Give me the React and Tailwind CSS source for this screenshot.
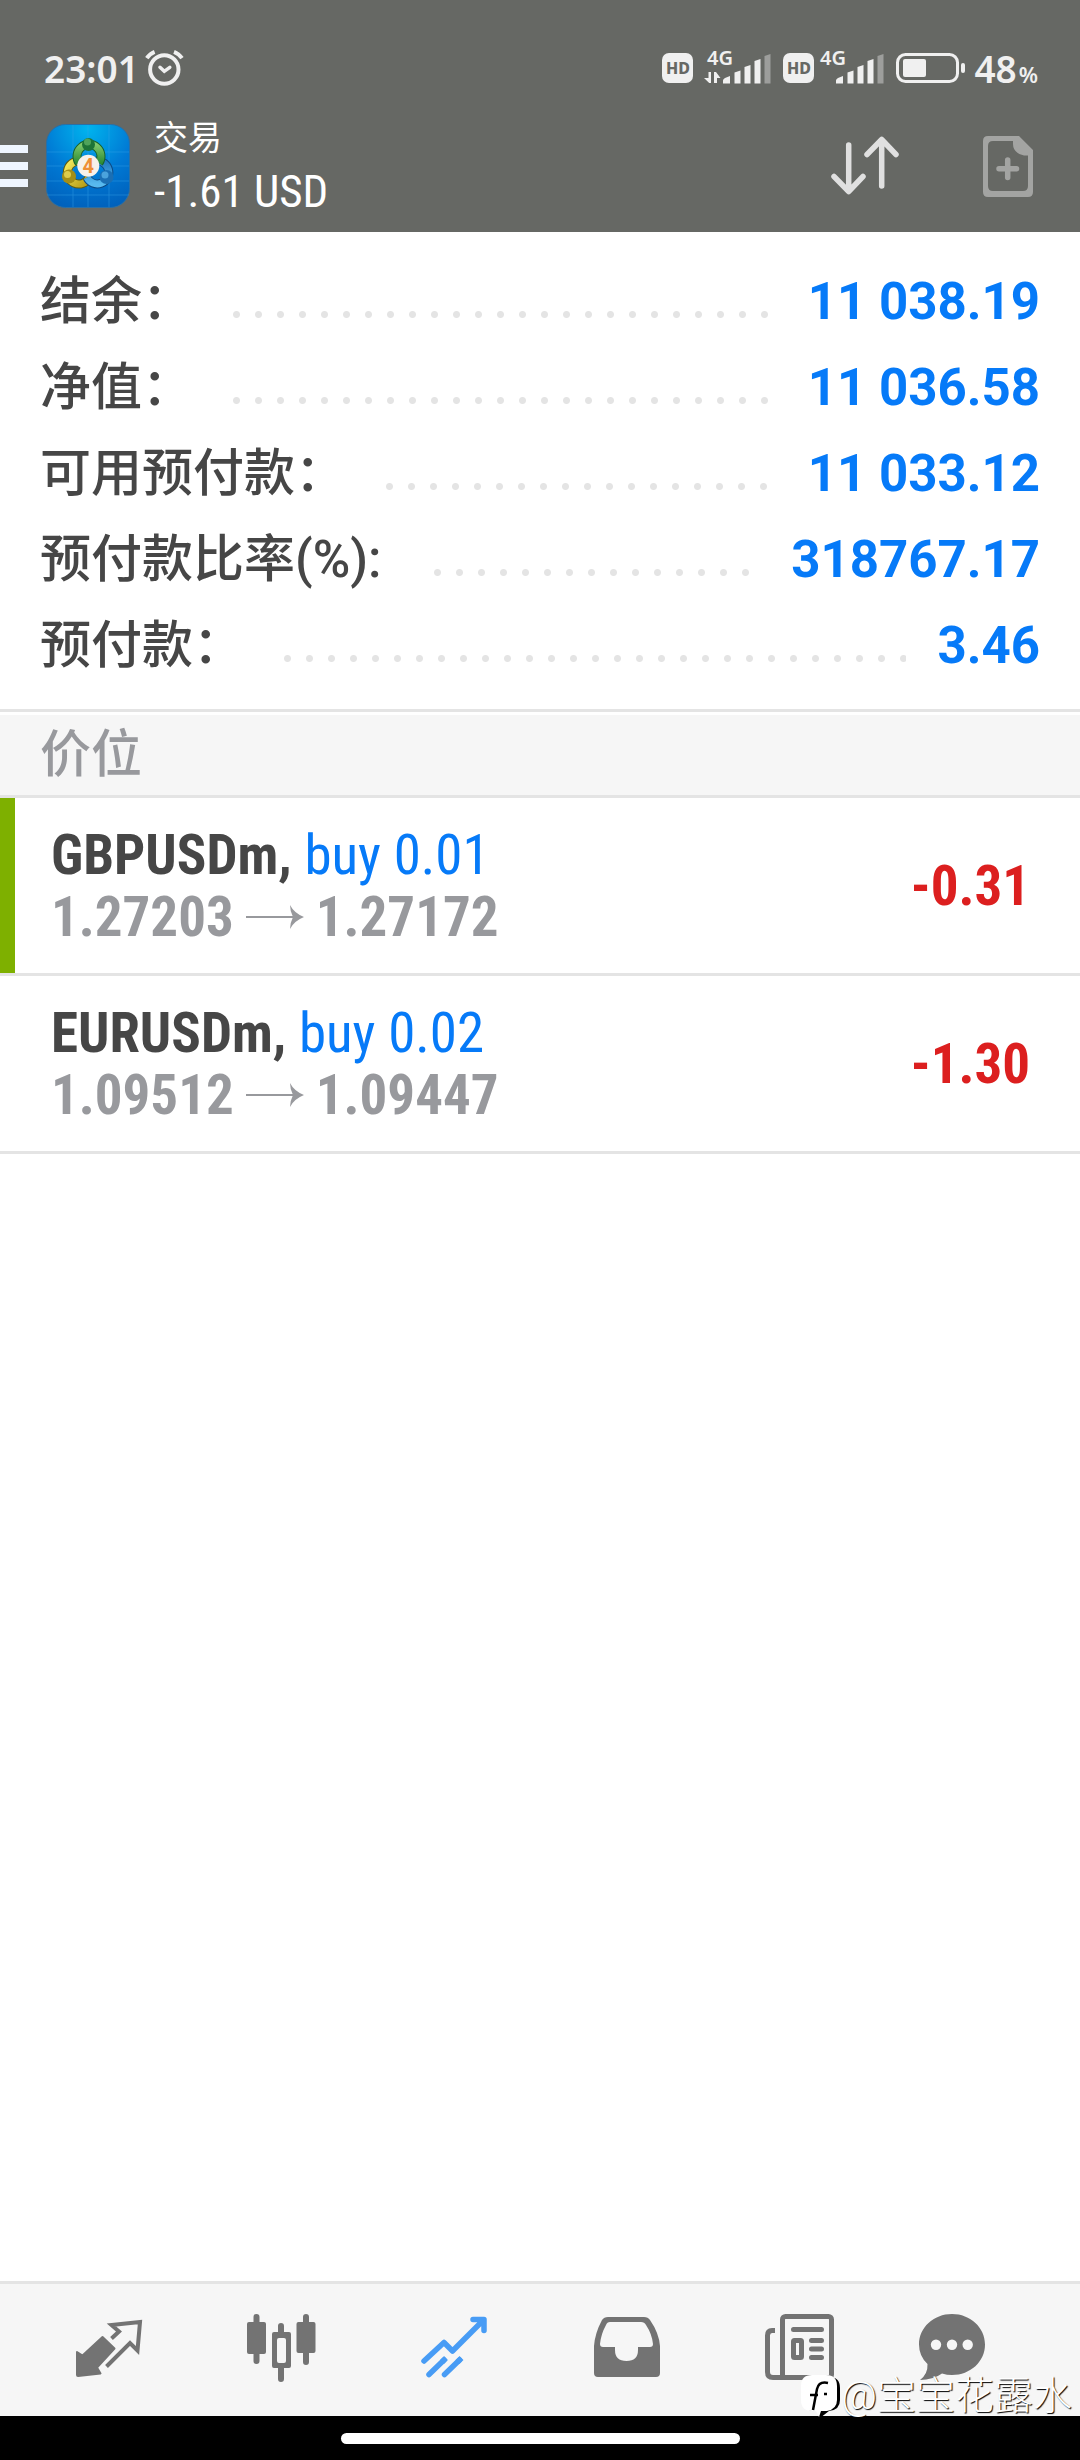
import React from 'react';

const summary = [
  { label: '结余：', value: '11 038.19' },
  { label: '净值：', value: '11 036.58' },
  { label: '可用预付款：', value: '11 033.12' },
  { label: '预付款比率(%):\u00a0', value: '318767.17' },
  { label: '预付款：', value: '3.46' },
];

const positions = [
  { symbol: 'GBPUSDm', side: 'buy 0.01', open: '1.27203', current: '1.27172', profit: '-0.31', active: true },
  { symbol: 'EURUSDm', side: 'buy 0.02', open: '1.09512', current: '1.09447', profit: '-1.30', active: false },
];

const AlarmIcon = () => (
  <svg width="42" height="40" viewBox="0 0 42 40" fill="none" stroke="currentColor" strokeWidth="4" strokeLinecap="round">
    <circle cx="21.3" cy="21.5" r="14.2" />
    <path d="M17 19.3l4.3 4 5.5-4" strokeWidth="3.5" />
    <path d="M3.8 10.2Q7 5.5 11.6 3.8M31 3.8Q35.6 5.5 39 10.2" strokeLinecap="butt" />
  </svg>
);

const HdBadge = () => (
  <span className="flex h-[30px] w-[31px] items-center justify-center rounded-[7px] bg-[#f0f0f0] text-[16px] leading-none font-extrabold text-[#666864]">
    HD
  </span>
);

const SignalIcon = ({ data }) => (
  <svg width="68" height="52" viewBox="0 -8 68 52" fill="currentColor">
    <text x="4" y="15" fontSize="20" fontWeight="600">4G</text>
    {data && <path d="M1 28h4.5v-6H8v11H6.2zM11 22h2l4.5 6H14v5h-3z" />}
    <path d="M20 33.5v-3Q20 29 22 28l5-2v7.5zM31.5 33.5v-11l6-2v13zM41.5 33.5V17l6-2v18.5zM51.5 33.5V11l6-2v24.5z" />
    <path d="M61.5 33.5V6l6-2v29.5z" opacity="0.4" />
  </svg>
);

const BatteryIcon = () => (
  <svg width="70" height="32" viewBox="0 0 70 32" fill="currentColor">
    <rect x="1.5" y="2.5" width="60" height="27" rx="8" fill="none" stroke="currentColor" strokeWidth="3" />
    <rect x="7" y="7" width="23" height="18" rx="2" />
    <rect x="65" y="11" width="4" height="10" rx="2" />
  </svg>
);

const AppLogo = () => (
  <svg width="84" height="84" viewBox="0 0 84 84">
    <defs>
      <radialGradient id="logoBg" cx="0.5" cy="0.05" r="1">
        <stop offset="0" stopColor="#00b4ee" />
        <stop offset="0.55" stopColor="#0079d4" />
        <stop offset="1" stopColor="#0060bb" />
      </radialGradient>
      <linearGradient id="logoGreen" x1="0" y1="0" x2="0" y2="1">
        <stop offset="0" stopColor="#7fc86a" />
        <stop offset="1" stopColor="#2d8c35" />
      </linearGradient>
      <linearGradient id="logoYellow" x1="0" y1="0" x2="1" y2="1">
        <stop offset="0" stopColor="#f4ea5e" />
        <stop offset="1" stopColor="#b59a14" />
      </linearGradient>
      <linearGradient id="logoBlue" x1="0" y1="0" x2="0" y2="1">
        <stop offset="0" stopColor="#1f78c0" />
        <stop offset="1" stopColor="#58b9ee" />
      </linearGradient>
    </defs>
    <rect x="0.5" y="0.5" width="83" height="83" rx="19" fill="url(#logoBg)" stroke="#2a6fa5" />
    <path d="M27 1v82M42 1v82M63 1v82M1 28h82M1 42h82M1 57h82M1 71h82" stroke="#3aa6ea" strokeWidth="0.8" opacity="0.5" />
    <path d="M36 37.5A11.5 11.5 0 1 0 43 54" fill="none" stroke="#5d5a12" strokeWidth="9" />
    <path d="M36 37.5A11.5 11.5 0 1 0 43 54" fill="none" stroke="url(#logoYellow)" strokeWidth="7" />
    <path d="M50 37A11.5 11.5 0 1 1 41 53.5" fill="none" stroke="#0b4a85" strokeWidth="9" />
    <path d="M50 37A11.5 11.5 0 1 1 41 53.5" fill="none" stroke="url(#logoBlue)" strokeWidth="7" />
    <path d="M33 39a12 12 0 1 1 20 0" fill="none" stroke="#17602a" strokeWidth="9" />
    <path d="M33 39a12 12 0 1 1 20 0" fill="none" stroke="url(#logoGreen)" strokeWidth="7" />
    <circle cx="42.5" cy="20.5" r="6.5" fill="#1d7336" />
    <circle cx="41.5" cy="18" r="3.5" fill="#4fa35a" />
    <circle cx="23" cy="52.5" r="7" fill="#a48e16" />
    <circle cx="21.5" cy="50.5" r="3.5" fill="#dccb4b" />
    <circle cx="60.5" cy="53" r="7" fill="#1b6fb4" />
    <circle cx="59" cy="51" r="3.5" fill="#4ba3dc" />
    <circle cx="42.3" cy="41.7" r="11" fill="#f6f1ea" />
    <text x="42.3" y="49" textAnchor="middle" fontSize="20" fontWeight="700" fill="#ee8f35">4</text>
  </svg>
);

const SortIcon = () => (
  <svg width="72" height="64" viewBox="0 0 72 64" fill="none" stroke="#e0e0e0" strokeWidth="5.5" strokeLinecap="round" strokeLinejoin="round">
    <path d="M19.7 11v46M5 42.5l14.7 15L34 42.5" />
    <path d="M52.7 52V6M38 20.5l14.7-15L67 20.5" />
  </svg>
);

const NewOrderIcon = () => (
  <svg width="50" height="61" viewBox="0 0 50 61" fill="#a3a4a2">
    <path fillRule="evenodd" d="M5 0h31l14 14v42q0 5-5 5H5q-5 0-5-5V5q0-5 5-5zM10 5Q5 5 5 10v40q0 5 5 5h30q5 0 5-5V19.5h-4Q30 17 30 8V5z" />
    <path d="M24.7 24v17.5M16 32.7h17.5" stroke="#a3a4a2" strokeWidth="5.5" strokeLinecap="round" />
  </svg>
);

const PriceArrow = () => (
  <svg width="58" height="24" viewBox="0 0 58 24" fill="#98999d">
    <path d="M0 11h47v2H0z" />
    <path d="M44 0Q48 8 58 12 48 16 44 24q0-6 3-12-3-6-3-12z" />
  </svg>
);

const QuotesIcon = () => (
  <svg width="72" height="72" viewBox="0 0 72 72" fill="currentColor">
    <path d="M5 40l5.5 3.5L30.5 25l12 11.5L25 55.5l3.5 6L6 64q-1 0-1-1z" stroke="currentColor" strokeWidth="2" strokeLinejoin="round" />
    <path d="M39.5 26.5l7.5-7-7.5-6.5L68 10l-2.5 28.5L58 31 34.5 54.5" fill="none" stroke="currentColor" strokeWidth="4" />
  </svg>
);

const ChartIcon = () => (
  <svg width="72" height="72" viewBox="0 0 72 72" fill="currentColor">
    <path d="M11.5 5v44M36 14v9M36 54v13M61 5v45" stroke="currentColor" strokeWidth="6" strokeLinecap="round" />
    <rect x="2" y="10" width="19" height="32" rx="2" />
    <rect x="51.5" y="10" width="19" height="31" rx="2" />
    <path fillRule="evenodd" d="M29 20h15q2 0 2 2v32q0 2-2 2H29q-2 0-2-2V22q0-2 2-2zm5 6q-2 0-2 2v21q0 2 2 2h5q2 0 2-2V28q0-2-2-2z" />
  </svg>
);

const TradeIcon = () => (
  <svg width="72" height="72" viewBox="0 0 72 72" fill="none" stroke="currentColor" strokeWidth="5.5" strokeLinecap="round" strokeLinejoin="round">
    <path d="M6 49l20-18.5 8.5 8.5L65 8.5M55 7.5h11v11" />
    <path d="M11 62.5L26 48M26.5 62.5l15-14.5" />
    <path d="M24 50l4-4M39.5 50l4-4" strokeLinecap="butt" />
  </svg>
);

const HistoryIcon = () => (
  <svg width="72" height="72" viewBox="0 0 72 72" fill="currentColor">
    <path fillRule="evenodd" d="M18 5h36q4 0 6 3 9 13 10 26v27q0 4-4 4H8q-4 0-4-4V34Q5 21 12 8q2-3 6-3zm2 5q-3 0-4 3-5 9-6 19 0 3 3 3h12v3q0 11 11.5 11T48 38v-3h12q3 0 3-3-1-10-7-19-1.5-3-5-3z" />
  </svg>
);

const NewsIcon = () => (
  <svg width="72" height="72" viewBox="0 0 72 72" fill="none" stroke="currentColor" strokeWidth="5">
    <rect x="19.5" y="4.5" width="49" height="61" rx="3" />
    <path d="M12 18.5H9q-4.5 0-4.5 5V60q0 5.500 5.500 5.500h12" />
    <path d="M30.5 17.5h28M48.5 28.5h10M48.5 37h10M48.5 45.5h10" strokeLinecap="round" />
    <rect x="30.5" y="28.5" width="8" height="17" rx="1" />
  </svg>
);

const ChatIcon = () => (
  <svg width="106" height="72" viewBox="0 0 106 72" fill="currentColor">
    <path d="M33 2c18.5 0 33 13.5 33 30.5S51.5 63 33 63q-5 0-10-1.5Q14 68 1 68q8-6 7.5-16Q0 44 0 32.5C0 15.5 14.5 2 33 2z" />
    <g fill="#f6f6f6">
      <circle cx="17" cy="32.7" r="5.2" />
      <circle cx="33" cy="32.7" r="5.2" />
      <circle cx="48.7" cy="32.7" r="5.2" />
    </g>
  </svg>
);

const tabs = [
  { name: '行情', icon: QuotesIcon },
  { name: '图表', icon: ChartIcon },
  { name: '交易', icon: TradeIcon, active: true },
  { name: '历史', icon: HistoryIcon },
  { name: '新闻', icon: NewsIcon },
  { name: '消息', icon: ChatIcon },
];

const Header = () => (
  <header className="bg-[#666864] pt-9 text-white">
    {/* Status bar */}
    <div className="flex h-16 items-center pr-[42px] pl-11 font-['Noto_Sans',sans-serif] text-[#f0f0f0]">
      <span className="text-[37px] leading-none font-semibold">23:01</span>
      <span className="ml-1">
        <AlarmIcon />
      </span>
      <div className="ml-auto flex items-center">
        <HdBadge />
        <span className="ml-2.5">
          <SignalIcon data />
        </span>
        <span className="ml-3">
          <HdBadge />
        </span>
        <span className="ml-0.5">
          <SignalIcon />
        </span>
        <span className="ml-3">
          <BatteryIcon />
        </span>
        <span className="ml-2 flex items-baseline">
          <span className="text-[37px] leading-none font-semibold">48</span>
          <span className="ml-0.5 text-[22px] leading-none font-semibold">%</span>
        </span>
      </div>
    </div>

    {/* Toolbar */}
    <div className="flex h-[132px] items-center pr-[47px]">
      <button type="button" aria-label="菜单" className="flex flex-col gap-[9px]">
        <span className="h-2 w-7 bg-[#eff6ff]"></span>
        <span className="h-2 w-7 bg-[#eff6ff]"></span>
        <span className="h-2 w-7 bg-[#eff6ff]"></span>
      </button>
      <span className="ml-[18px]">
        <AppLogo />
      </span>
      <div className="ml-6 pt-2">
        <h1 className="text-[34px] leading-[44px]">交易</h1>
        <p className="font-['Roboto_Condensed','Liberation_Sans_Narrow',Roboto,sans-serif] text-[45px] leading-[64px]">-1.61 USD</p>
      </div>
      <div className="ml-auto flex items-center gap-[82px]">
        <button type="button" aria-label="排序">
          <SortIcon />
        </button>
        <button type="button" aria-label="新订单">
          <NewOrderIcon />
        </button>
      </div>
    </div>
  </header>
);

const SummaryRow = ({ label, value }) => (
  <div className="flex h-[86px] items-center text-[51px] leading-none">
    <dt className="font-medium text-[#464646]">{label}</dt>
    <dd className="flex flex-1 items-center">
      <span className="mt-[26px] mr-[31px] ml-10 h-[7px] flex-1 bg-[radial-gradient(circle_at_3.5px_3.5px,#e4e4e4_3px,transparent_4px)] bg-[length:22px_7px] bg-repeat-x"></span>
      <span className="font-bold text-[#067af8]">{value}</span>
    </dd>
  </div>
);

const PositionRow = ({ position }) => (
  <li className="flex border-b-[3px] border-[#e4e4e4] font-['Roboto_Condensed','Liberation_Sans_Narrow',Roboto,sans-serif] text-[55px] leading-[62px]">
    <span className={position.active ? 'w-[15px] bg-[#7eb000]' : 'w-[15px]'}></span>
    <div className="flex flex-1 items-center justify-between pt-[26px] pr-[50px] pb-[25px] pl-9">
      <div>
        <p>
          <span className="font-bold text-[#464646]">{position.symbol}, </span>
          <span className="text-[#067af8]">{position.side}</span>
        </p>
        <p className="flex items-center gap-3 font-bold text-[#98999d]">
          <span>{position.open}</span>
          <PriceArrow />
          <span>{position.current}</span>
        </p>
      </div>
      <span className="font-bold text-[#dc1f1f]">{position.profit}</span>
    </div>
  </li>
);

const Watermark = () => (
  <div className="absolute right-2 bottom-[42px] flex items-center text-white">
    <svg width="40" height="44" viewBox="0 0 40 44">
      <path d="M12 3h16q11 0 11 11v12q0 10-11 11l-9 7-3-7h-4Q3 37 3 26V14Q3 3 12 3z" fill="#000" />
      <path d="M11 1h14q11 0 11 11v14q0 9-10 11h-6l-2 6-3-6h-4Q0 37 0 26V12Q0 1 11 1z" fill="#fff" />
      <path d="M27 9q-9-2-11 6l-4 21M9 21h8M23 20h3" fill="none" stroke="#000" strokeWidth="2.5" />
    </svg>
    <span className="text-[39px] leading-[44px] font-light [text-shadow:1px_1px_1px_#000]">@宝宝花露水</span>
  </div>
);

const App = () => {
  return (
    <div className="relative flex min-h-screen flex-col bg-white font-[Roboto,'Noto_Sans_CJK_SC',sans-serif]">
      <Header />

      <main className="flex-1">
        {/* Account summary */}
        <dl className="border-b-[3px] border-[#e4e4e4] px-10 pt-[26px] pb-[21px]">
          {summary.map((row) => (
            <SummaryRow key={row.label} {...row} />
          ))}
        </dl>

        {/* Open positions */}
        <h2 className="mt-[3px] border-b-[3px] border-[#e4e4e4] bg-[#f6f6f6] px-10 text-[51px] leading-[80px] font-medium text-[#98999d]">
          价位
        </h2>
        <ul>
          {positions.map((position) => (
            <PositionRow key={position.symbol} position={position} />
          ))}
        </ul>
      </main>

      {/* Bottom navigation */}
      <nav className="grid grid-cols-6 border-t-[3px] border-[#e4e4e4] bg-[#f6f6f6] px-[22px] text-[#737373]">
        {tabs.map((tab) => {
          const Icon = tab.icon;
          return (
            <button
              key={tab.name}
              type="button"
              aria-label={tab.name}
              className={`flex h-[132px] items-center justify-center pb-1 ${tab.active ? 'text-[#489cf5]' : ''}`}
            >
              <Icon />
            </button>
          );
        })}
      </nav>

      <div className="flex h-11 items-center justify-center bg-black">
        <span className="h-[11px] w-[399px] rounded-full bg-white"></span>
      </div>

      <Watermark />
    </div>
  );
};

export default App;
